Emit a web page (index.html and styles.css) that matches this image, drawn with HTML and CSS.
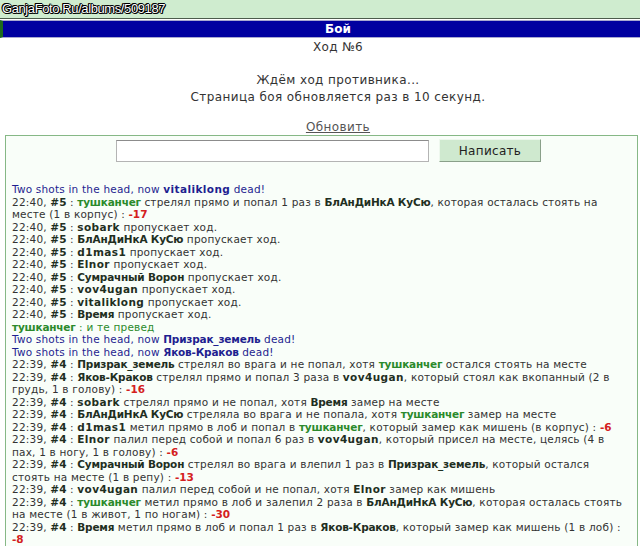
FILE: index.html
```html
<!DOCTYPE html>
<html lang="ru">
<head>
  <meta charset="UTF-8" />
  <title>Бой</title>
  <link rel="stylesheet" href="styles.css">
</head>
<body>
  <div class="topbar"><span class="watermark">GanjaFoto.Ru/albums/509187</span></div>
  <div class="title">Бой</div>

  <div class="turn">Ход №6</div>
  <div class="status">
    Ждём ход противника...<br>
    Страница боя обновляется раз в 10 секунд.
  </div>
  <div class="refresh"><a href="#">Обновить</a></div>

  <div class="chat">
    <form class="say" onsubmit="return false">
      <input type="text" class="say-input">
      <button type="submit" class="say-btn">Написать</button>
    </form>

    <div class="log">
      <div class="kill">Two shots in the head, now <b class="en">vitaliklong</b> dead!</div>
      <div>22:40, <i>#5</i> : <b class="me">тушканчег</b> стрелял прямо и попал 1 раз в <b>БлАнДиНкА КуСю</b>, которая осталась стоять на месте (1 в корпус) : <i class="dmg">-17</i></div>
      <div>22:40, <i>#5</i> : <b class="en">sobark</b> пропускает ход.</div>
      <div>22:40, <i>#5</i> : <b>БлАнДиНкА КуСю</b> пропускает ход.</div>
      <div>22:40, <i>#5</i> : <b class="en">d1mas1</b> пропускает ход.</div>
      <div>22:40, <i>#5</i> : <b class="en">Elnor</b> пропускает ход.</div>
      <div>22:40, <i>#5</i> : <b>Сумрачный Ворон</b> пропускает ход.</div>
      <div>22:40, <i>#5</i> : <b class="en">vov4ugan</b> пропускает ход.</div>
      <div>22:40, <i>#5</i> : <b class="en">vitaliklong</b> пропускает ход.</div>
      <div>22:40, <i>#5</i> : <b>Время</b> пропускает ход.</div>
      <div class="msg"><b>тушканчег</b> : и те превед</div>
      <div class="kill">Two shots in the head, now <b>Призрак_земель</b> dead!</div>
      <div class="kill">Two shots in the head, now <b>Яков-Краков</b> dead!</div>
      <div>22:39, <i>#4</i> : <b>Призрак_земель</b> стрелял во врага и не попал, хотя <b class="me">тушканчег</b> остался стоять на месте</div>
      <div>22:39, <i>#4</i> : <b>Яков-Краков</b> стрелял прямо и попал 3 раза в <b class="en">vov4ugan</b>, который стоял как вкопанный (2 в грудь, 1 в голову) : <i class="dmg">-16</i></div>
      <div>22:39, <i>#4</i> : <b class="en">sobark</b> стрелял прямо и не попал, хотя <b>Время</b> замер на месте</div>
      <div>22:39, <i>#4</i> : <b>БлАнДиНкА КуСю</b> стреляла во врага и не попала, хотя <b class="me">тушканчег</b> замер на месте</div>
      <div>22:39, <i>#4</i> : <b class="en">d1mas1</b> метил прямо в лоб и попал в <b class="me">тушканчег</b>, который замер как мишень (в корпус) : <i class="dmg">-6</i></div>
      <div>22:39, <i>#4</i> : <b class="en">Elnor</b> палил перед собой и попал 6 раз в <b class="en">vov4ugan</b>, который присел на месте, целясь (4 в пах, 1 в ногу, 1 в голову) : <i class="dmg">-6</i></div>
      <div>22:39, <i>#4</i> : <b>Сумрачный Ворон</b> стрелял во врага и влепил 1 раз в <b>Призрак_земель</b>, который остался стоять на месте (1 в репу) : <i class="dmg">-13</i></div>
      <div>22:39, <i>#4</i> : <b class="en">vov4ugan</b> палил перед собой и не попал, хотя <b class="en">Elnor</b> замер как мишень</div>
      <div>22:39, <i>#4</i> : <b class="me">тушканчег</b> метил прямо в лоб и залепил 2 раза в <b>БлАнДиНкА КуСю</b>, которая осталась стоять на месте (1 в живот, 1 по ногам) : <i class="dmg">-30</i></div>
      <div>22:39, <i>#4</i> : <b>Время</b> метил прямо в лоб и попал 1 раз в <b>Яков-Краков</b>, который замер как мишень (1 в лоб) : <i class="dmg">-8</i></div>
    </div>
  </div>
</body>
</html>
```

FILE: styles.css
```css
html {
  overflow: hidden;
}
body {
  margin: 0;
  font-family: 'DejaVu Sans', Verdana, sans-serif;
  font-size: 12px;
  color: #333;
  background-color: #fff;
}
.topbar {
  height: 18px;
  background-color: #cfeccf;
  border-bottom: 1px solid #4c5c4c;
  position: relative;
}
.watermark {
  position: absolute;
  left: 2px;
  top: 1px;
  font-family: 'Liberation Sans', Arial, sans-serif;
  font-size: 13px;
  letter-spacing: -0.4px;
  color: #fff;
  text-shadow: -1px 0 #000, 1px 0 #000, 0 -1px #000, 0 1px #000, 1px 1px #000, -1px -1px #000;
}
.title {
  margin-top: 1px;
  height: 16px;
  line-height: 16px;
  padding-left: 33px;
  background-color: #0000a0;
  border-top: 1px solid #a8a8d0;
  border-bottom: 1px solid #a8a8d0;
  border-left: 3px solid #1d6b1d;
  color: #fff;
  font-weight: bold;
  text-align: center;
}
.turn, .status, .refresh {
  text-align: center;
  padding-left: 36px;
  letter-spacing: 0.4px;
}
.turn {
  margin-top: 1px;
  line-height: 17px;
}
.status {
  margin-top: 16px;
  line-height: 17px;
}
.refresh {
  margin-top: 13px;
  line-height: 16px;
}
.refresh a {
  color: #555;
}
.chat {
  margin: 0 2px 0 5px;
  border: 1px solid #86b886;
  border-bottom: none;
  background-color: #f9fef9;
  padding: 3px 0 20px;
}
.say {
  display: flex;
  justify-content: center;
  align-items: center;
  gap: 10px;
  padding-left: 14px;
}
.say-input {
  width: 313px;
  height: 22px;
  box-sizing: border-box;
  border: 1px solid #b4b4b4;
  border-top-color: #8c8c8c;
  background: #fff;
}
.say-btn {
  width: 102px;
  height: 23px;
  font-family: 'DejaVu Sans', Verdana, sans-serif;
  font-size: 12px;
  letter-spacing: 0.3px;
  color: #222;
  background-color: #cfe9cf;
  border: 1px solid;
  border-color: #eef8ee #8aa08a #8aa08a #eef8ee;
}
.log {
  margin-top: 21px;
  padding: 0 7px 0 6px;
  font-size: 10.5px;
  letter-spacing: 0.2px;
  line-height: 12.5px;
  color: #333;
}
.log b {
  color: #1f2f1f;
  letter-spacing: -0.2px;
}
.log b.en {
  letter-spacing: 0.4px;
}
.log i {
  font-style: normal;
  font-weight: bold;
  color: #1f2f1f;
  letter-spacing: 0;
}
.log b.me, .msg, .msg b {
  color: #2b8a2b;
}
.log i.dmg {
  color: #d42020;
}
.kill, .kill b {
  color: #1f1f90;
}
```
